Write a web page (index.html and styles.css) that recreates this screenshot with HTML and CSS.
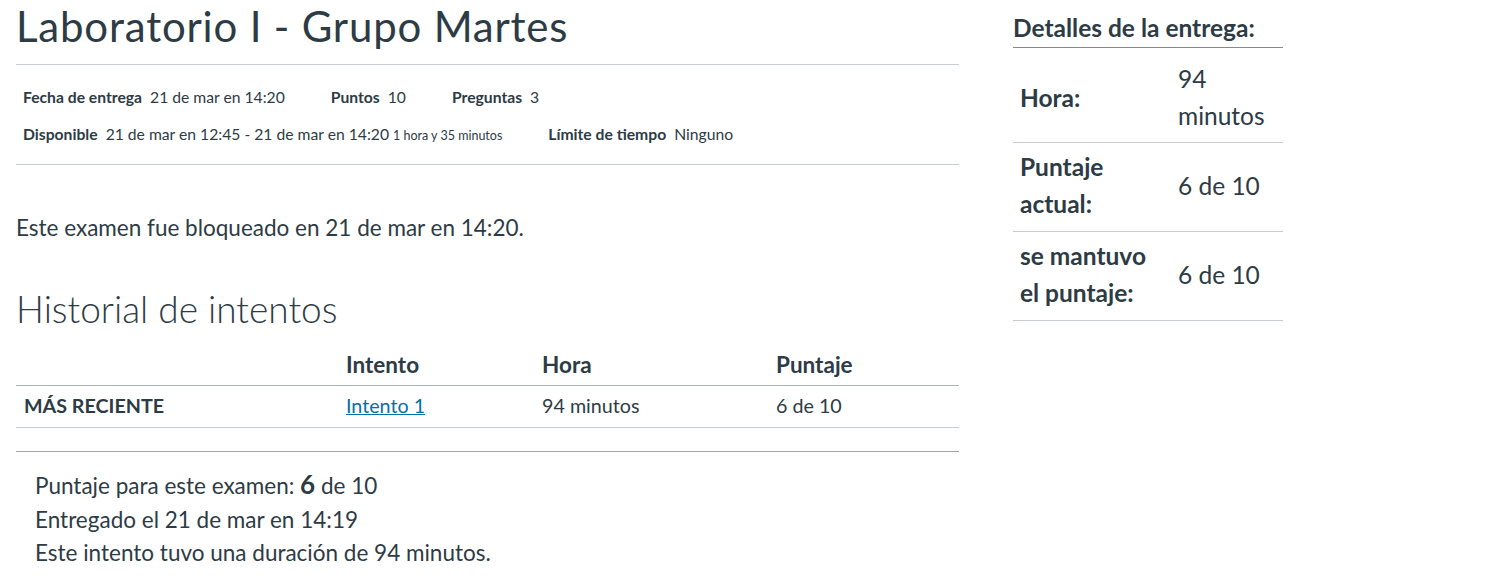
FILE: index.html
```html
<!DOCTYPE html>
<html lang="es">
<head>
<meta charset="utf-8">
<title>Laboratorio I - Grupo Martes</title>
<link rel="stylesheet" href="styles.css">
</head>
<body>
<div class="page">
  <main class="main">
    <h1 class="title">Laboratorio I - Grupo Martes</h1>
    <div class="details">
      <div class="detail-row">
        <div class="item"><span class="lbl">Fecha de entrega</span><span class="val">21 de mar en 14:20</span></div>
        <div class="item"><span class="lbl">Puntos</span><span class="val">10</span></div>
        <div class="item"><span class="lbl">Preguntas</span><span class="val">3</span></div>
      </div>
      <div class="detail-row">
        <div class="item"><span class="lbl">Disponible</span><span class="val">21 de mar en 12:45 - 21 de mar en 14:20 <small class="small">1 hora y 35 minutos</small></span></div>
        <div class="item"><span class="lbl">Límite de tiempo</span><span class="val">Ninguno</span></div>
      </div>
    </div>
    <p class="locked">Este examen fue bloqueado en 21 de mar en 14:20.</p>
    <h2 class="history-title">Historial de intentos</h2>
    <table class="history">
      <thead>
        <tr><th class="c1"></th><th class="c2">Intento</th><th class="c3">Hora</th><th class="c4">Puntaje</th></tr>
      </thead>
      <tbody>
        <tr><th class="c1 recent">MÁS RECIENTE</th><td><a class="link" href="#">Intento 1</a></td><td>94 minutos</td><td>6 de 10</td></tr>
      </tbody>
    </table>
    <div class="summary">
      <div class="summary-line">Puntaje para este examen: <strong class="score">6</strong> de 10</div>
      <div class="summary-line">Entregado el 21 de mar en 14:19</div>
      <div class="summary-line">Este intento tuvo una duración de 94 minutos.</div>
    </div>
  </main>
  <aside class="side">
    <h2 class="side-title">Detalles de la entrega:</h2>
    <table class="side-table">
      <tr class="first"><th>Hora:</th><td>94 minutos</td></tr>
      <tr><th>Puntaje actual:</th><td>6 de 10</td></tr>
      <tr><th>se mantuvo el puntaje:</th><td>6 de 10</td></tr>
    </table>
  </aside>
</div>
</body>
</html>
```
FILE: styles.css
```css
* { box-sizing: border-box; }
html, body { margin: 0; padding: 0; background: #fff; }
body {
  font-family: Lato, "Open Sans", sans-serif;
  color: #2d3b45;
  font-size: 22.5px;
}
.page {
  display: flex;
  gap: 54px;
  padding: 0 16px;
}
.main { width: 943px; flex: none; }
.side { width: 270px; flex: none; }

.title {
  margin: 0;
  font-size: 42px;
  font-weight: 400;
  line-height: 52px;
  height: 65px;
  border-bottom: 1px solid #c7cdd1;
  letter-spacing: 0.8px;
}
.details {
  padding: 14px 7px 10px;
  border-bottom: 1px solid #c7cdd1;
  font-size: 15.7px;
}
.detail-row {
  display: flex;
  line-height: 21px;
  padding: 8px 0;
}
.item { margin-right: 46px; white-space: nowrap; }
.lbl { font-weight: 700; margin-right: 8px; }
.small { font-size: 12.5px; }

.locked {
  margin: 49px 0 0;
  line-height: 28px;
}
.history-title {
  margin: 45px 0 0;
  font-size: 37px;
  font-weight: 300;
  line-height: 44px;
}
.history {
  margin-top: 12px;
  width: 100%;
  border-collapse: collapse;
}
.history th, .history td {
  text-align: left;
  padding: 7px 8px 9px;
  line-height: 25px;
  font-size: 19.7px;
}
.history thead th {
  font-weight: 700;
  font-size: 22.5px;
  line-height: 28px;
  padding: 8px 8px 6px;
  border-bottom: 1px solid #a8b3ba;
}
.history tbody th, .history tbody td { border-bottom: 1px solid #c7cdd1; }
.history .c1 { width: 322px; }
.history .c2 { width: 196px; }
.history .c3 { width: 234px; }
.history .recent { font-weight: 700; }
.link { color: #0770a3; text-decoration: underline; }

.summary {
  margin-top: 23px;
  border-top: 1px solid #a5a5a5;
  padding: 16px 19px 0;
}
.summary-line { line-height: 33.5px; }
.score { font-size: 26px; }

.side-title {
  margin: 13px 0 0;
  font-size: 24.5px;
  font-weight: 700;
  line-height: 30px;
  padding-bottom: 4px;
  border-bottom: 1px solid #888;
}
.side-table {
  width: 100%;
  border-collapse: collapse;
  font-size: 24.5px;
}
.side-table th, .side-table td {
  text-align: left;
  vertical-align: middle;
  line-height: 37px;
  padding: 5px 7px 9px;
  border-bottom: 1px solid #c7cdd1;
}
.side-table th { width: 158px; font-weight: 700; }
.side-table td { font-weight: 400; }
.side-table .first th, .side-table .first td { padding-top: 12px; padding-bottom: 8px; }
```
